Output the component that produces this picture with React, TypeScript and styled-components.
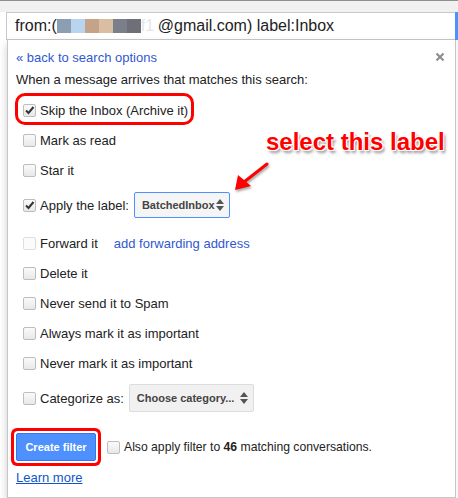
import React from 'react';
import styled, { createGlobalStyle, css } from 'styled-components';

const GlobalStyle = createGlobalStyle`
  html, body {
    margin: 0;
    padding: 0;
    background: #fff;
  }
  body {
    font-family: "Liberation Sans", Arial, sans-serif;
  }
`;

const Page = styled.div`
  position: relative;
  width: 458px;
  height: 498px;
  overflow: hidden;
  display: flex;
  flex-direction: column;
  background: #fff;
  color: #222;
`;

const TopStrip = styled.div`
  height: 11px;
  background: #f1f1f1;
  border-top: 1px solid #8f8f8f;
`;

const SearchRow = styled.div`
  display: flex;
  height: 28px;
  padding-left: 6px;
`;

const SearchInput = styled.div`
  flex: 1;
  display: flex;
  align-items: center;
  box-sizing: border-box;
  padding-left: 8px;
  border: 1px solid #c8c8c8;
  border-right: none;
  font-size: 16px;
  color: #222;
  white-space: nowrap;
`;

const Blur = styled.span<{ $color: string }>`
  display: inline-block;
  width: 14px;
  height: 14px;
  background: ${p => p.$color};
`;

const Faint = styled.span`
  display: inline-block;
  width: 17px;
  color: #e3e6ea;
`;

const SearchButton = styled.div`
  width: 3px;
  background: #4d90fe;
`;

const Body = styled.div`
  flex: 1;
  display: flex;
  min-height: 0;
`;

const Gutter = styled.div`
  width: 7px;
`;

const Panel = styled.div`
  width: 449px;
  box-sizing: border-box;
  border: 1px solid #c6c6c6;
  border-top: none;
  box-shadow: 0 4px 8px rgba(0, 0, 0, 0.2);
  padding: 8px 8px 0 8px;
  font-size: 13px;
`;

const RightStrip = styled.div`
  flex: 1;
  background: #f7f7f7;
`;

const TitleRow = styled.div`
  display: flex;
  justify-content: space-between;
  align-items: center;
  height: 18px;
`;

const Link = styled.span`
  color: #3158d0;
`;

const Close = styled.svg`
  margin-right: 3px;
`;

const Intro = styled.div`
  margin-top: 5px;
  line-height: 18px;
`;

const RowList = styled.div`
  display: flex;
  flex-direction: column;
  margin-top: 6px;
  padding-left: 7px;
`;

const Row = styled.div<{ $top?: number; $bottom?: number; $ring?: boolean }>`
  position: relative;
  display: flex;
  align-items: center;
  height: 30px;
  margin-top: ${p => p.$top || 0}px;
  margin-bottom: ${p => p.$bottom || 0}px;
  ${p => p.$ring && css`
    &::before {
      content: '';
      position: absolute;
      top: -2px;
      left: -8px;
      width: 179px;
      height: 32px;
      box-sizing: border-box;
      border: 3px solid #f00;
      border-radius: 10px;
    }
  `}
`;

const Box = styled.span<{ $disabled?: boolean }>`
  flex: none;
  display: inline-flex;
  align-items: center;
  justify-content: center;
  width: 13px;
  height: 13px;
  box-sizing: border-box;
  margin-right: 4px;
  border: 1px solid ${p => (p.$disabled ? '#dedede' : '#bdbdbd')};
  border-radius: 2px;
  background: ${p => (p.$disabled ? '#fbfbfb' : 'linear-gradient(#fafafa, #e8e8e8)')};
`;

const Gap = styled.span<{ $w: number }>`
  display: inline-block;
  width: ${p => p.$w}px;
`;

const Select = styled.div<{ $focused?: boolean; $w: number }>`
  display: flex;
  align-items: center;
  justify-content: space-between;
  box-sizing: border-box;
  width: ${p => p.$w}px;
  height: ${p => (p.$focused ? 26 : 28)}px;
  margin-left: 5px;
  padding: 0 5px 0 7px;
  border: 1px solid ${p => (p.$focused ? '#4d90fe' : '#dcdcdc')};
  border-radius: 2px;
  background: ${p => (p.$focused ? '#f5f5f5' : '#f1f1f1')};
  color: #444;
  font-size: 11px;
  font-weight: bold;
`;

const Footer = styled.div`
  display: flex;
  align-items: center;
  height: 30px;
  margin-top: 19px;
`;

const FilterButton = styled.div`
  display: flex;
  align-items: center;
  justify-content: center;
  width: 80px;
  height: 28px;
  box-sizing: border-box;
  margin-right: 11px;
  border: 1px solid #3079ed;
  border-radius: 2px;
  background: #4d90fe;
  color: #fff;
  font-size: 11px;
  font-weight: bold;
  box-shadow: 0 0 0 2px #fff, 0 0 0 5px #f00;
`;

const ApplyText = styled.span`
  font-size: 12.2px;
`;

const LearnMore = styled.div`
  margin-top: 8px;
  line-height: 16px;
  color: #1155cc;
  text-decoration: underline;
`;

const Callout = styled.div`
  position: absolute;
  left: 266px;
  top: 128px;
  font-size: 24px;
  line-height: 28px;
  font-weight: bold;
  color: #f00;
  white-space: nowrap;
  text-shadow: 1px 1px 0 #fff, -1px -1px 0 #fff, 1px -1px 0 #fff, -1px 1px 0 #fff,
    2px 3px 3px rgba(0, 0, 0, 0.45);
`;

const Arrow = styled.svg`
  position: absolute;
  left: 230px;
  top: 158px;
  filter: drop-shadow(1px 2px 1px rgba(0, 0, 0, 0.35));
`;

const Check = ({ checked, disabled }: { checked?: boolean; disabled?: boolean }) => (
  <Box $disabled={disabled}>
    {checked && (
      <svg width="11" height="11" viewBox="0 0 11 11">
        <path d="M2 5.5 L4.5 8 L9.5 2" fill="none" stroke="#333" strokeWidth="2" />
      </svg>
    )}
  </Box>
);

const Arrows = () => (
  <svg width="8" height="12" viewBox="0 0 8 12">
    <path d="M4 0 L8 5 L0 5 Z M0 7 L8 7 L4 12 Z" fill="#555" />
  </svg>
);

const blurs = ['#8b9fb0', '#b9d4ee', '#c4a388', '#d9bea3', '#7a7f89', '#6e7078'];

export default function App() {
  return (
    <Page>
      <GlobalStyle />
      <TopStrip />
      <SearchRow>
        <SearchInput>
          from:(
          {blurs.map(c => (
            <Blur key={c} $color={c} />
          ))}
          <Faint>f1</Faint>
          @gmail.com) label:Inbox
        </SearchInput>
        <SearchButton />
      </SearchRow>
      <Body>
        <Gutter />
        <Panel>
          <TitleRow>
            <Link>« back to search options</Link>
            <Close width="8" height="8" viewBox="0 0 8 8">
              <path d="M0.5 0.5 L7.5 7.5 M7.5 0.5 L0.5 7.5" stroke="#8a8a8a" strokeWidth="2" />
            </Close>
          </TitleRow>
          <Intro>When a message arrives that matches this search:</Intro>
          <RowList>
            <Row $ring>
              <Check checked />
              Skip the Inbox (Archive it)
            </Row>
            <Row>
              <Check />
              Mark as read
            </Row>
            <Row>
              <Check />
              Star it
            </Row>
            <Row $top={5} $bottom={8}>
              <Check checked />
              Apply the label:
              <Select $focused $w={96}>
                BatchedInbox
                <Arrows />
              </Select>
            </Row>
            <Row>
              <Check disabled />
              Forward it
              <Gap $w={16} />
              <Link>add forwarding address</Link>
            </Row>
            <Row>
              <Check />
              Delete it
            </Row>
            <Row>
              <Check />
              Never send it to Spam
            </Row>
            <Row>
              <Check />
              Always mark it as important
            </Row>
            <Row>
              <Check />
              Never mark it as important
            </Row>
            <Row $top={5}>
              <Check />
              Categorize as:
              <Select $w={125}>
                Choose category...
                <Arrows />
              </Select>
            </Row>
          </RowList>
          <Footer>
            <FilterButton>Create filter</FilterButton>
            <Check />
            <ApplyText>
              Also apply filter to <b>46</b> matching conversations.
            </ApplyText>
          </Footer>
          <LearnMore>Learn more</LearnMore>
        </Panel>
        <RightStrip />
      </Body>
      <Callout>select this label</Callout>
      <Arrow width="45" height="40" viewBox="0 0 45 40">
        <path d="M37 6 L14 24" stroke="#f00" strokeWidth="3" strokeLinecap="round" />
        <path d="M5 32 L8 17 L21 28 Z" fill="#f00" />
      </Arrow>
    </Page>
  );
}
